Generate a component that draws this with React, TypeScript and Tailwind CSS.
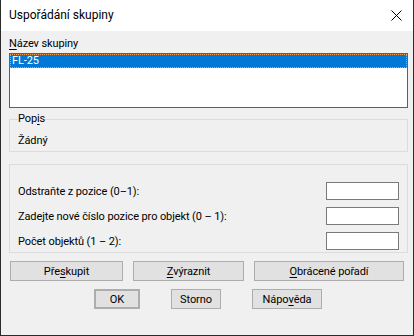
import React from "react";

function U({ children }: { children: React.ReactNode }) {
  return <span className="underline decoration-1 underline-offset-2">{children}</span>;
}

function Btn({ children, className = "" }: { children: React.ReactNode; className?: string }) {
  return (
    <button
      type="button"
      className={`h-[20px] bg-[#e1e1e1] border border-[#adadad] text-[11px] leading-none text-black flex items-center justify-center ${className}`}
    >
      {children}
    </button>
  );
}

function Field({ label }: { label: string }) {
  return (
    <div className="flex items-center justify-between h-[18px]">
      <span>{label}</span>
      <div className="w-[73px] h-[18px] bg-white border border-[#7a7a7a]" />
    </div>
  );
}

export default function App() {
  return (
    <div className="w-[414px] h-[336px] bg-[#f0f0f0] border-x border-b border-[#2b2b2b] flex flex-col font-['Roboto',_'Liberation_Sans',_sans-serif] text-[11px] leading-[15px] tracking-[-0.1px] text-black overflow-hidden">
      {/* titulek */}
      <div className="h-[31px] bg-white flex items-center justify-between pl-[8px] pr-[10px] shrink-0">
        <span className="text-[12px] tracking-normal">Uspořádání skupiny</span>
        <svg width="11" height="11" viewBox="0 0 11 11" className="mr-[1px]">
          <path d="M0.5 0.5L10.5 10.5M10.5 0.5L0.5 10.5" stroke="#000" strokeWidth="1" />
        </svg>
      </div>

      <div className="flex flex-col pl-[8px] pr-[5px]">
        <div className="mt-[4px] h-[16px] flex items-center">
          <span>
            <U>N</U>ázev skupiny
          </span>
        </div>

        <div className="mt-[2px] h-[55px] bg-white border border-[#0078d7]">
          <div className="h-[14px] bg-[#0078d7] text-white outline-1 outline-dotted outline-[#f0a050] -outline-offset-1 pl-[2px] leading-[14px]">
            FL-25
          </div>
        </div>

        <fieldset className="mt-[4px] border border-[#dcdcdc] pl-[8px] pb-[3px] h-[40px]">
          <legend className="px-0 leading-[14px] h-[14px]">
            Pop<U>i</U>s
          </legend>
          <div className="mt-[7px]">Žádný</div>
        </fieldset>

        <div className="mt-[12px] border border-[#dcdcdc] h-[89px] pt-[17px] pl-[8px] pr-[8px] flex flex-col gap-[7px]">
          <Field label="Odstraňte z pozice (0–1):" />
          <Field label="Zadejte nové číslo pozice pro objekt (0 – 1):" />
          <Field label="Počet objektů (1 – 2):" />
        </div>

        <div className="mt-[8px] flex pl-[1px]">
          <Btn className="w-[113px]">
            Pře<U>s</U>kupit
          </Btn>
          <Btn className="w-[111px] ml-[10px]">
            <U>Z</U>výraznit
          </Btn>
          <Btn className="w-[150px] ml-[10px]">
            <U>O</U>brácené pořadí
          </Btn>
        </div>

        <div className="mt-[8px] flex pl-[85px]">
          <Btn className="w-[46px] border-2 border-[#0078d7]">OK</Btn>
          <Btn className="w-[50px] ml-[31px]">Storno</Btn>
          <Btn className="w-[70px] ml-[31px]">
            Nápo<U>v</U>ěda
          </Btn>
        </div>
      </div>
    </div>
  );
}
